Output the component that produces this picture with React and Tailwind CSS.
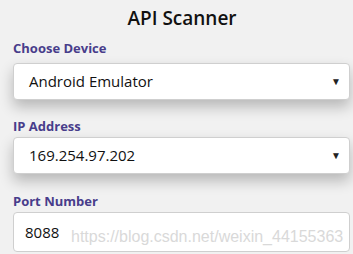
export default function App() {
  return (
    <div className="relative w-[353px] h-[254px] overflow-hidden bg-[#f1f1f1] font-['Open_Sans',sans-serif]">
      <div className="pl-[13px] pr-[3px] pt-[5px]">
        <h1 className="text-center text-[19px] font-semibold leading-[26px] text-[#111] pl-[1px]">API Scanner</h1>
        <div className="mt-[8px] text-[13px] font-bold leading-[18px] text-[#483d8b]">Choose Device</div>
        <div className="mt-[6px] flex h-[37px] items-center justify-between rounded-[4px] border border-[#cfcfcf] bg-white pl-[15px] pr-[8px] shadow-[0_7px_14px_rgba(0,0,0,0.24)]">
          <span className="text-[15px] text-[#111]">Android Emulator</span>
          <span className="text-[10px] text-[#222]">▼</span>
        </div>
        <div className="mt-[17px] text-[13px] font-bold leading-[18px] text-[#483d8b]">IP Address</div>
        <div className="mt-[2px] flex h-[37px] items-center justify-between rounded-[4px] border border-[#cfcfcf] bg-white pl-[15px] pr-[8px] shadow-[0_7px_14px_rgba(0,0,0,0.24)]">
          <span className="text-[15px] text-[#111]">169.254.97.202</span>
          <span className="text-[10px] text-[#222]">▼</span>
        </div>
        <div className="mt-[18px] text-[13px] font-bold leading-[18px] text-[#483d8b]">Port Number</div>
        <div className="mt-[2px] flex h-[40px] items-center rounded-[4px] border border-[#cfcfcf] bg-white pl-[11px]">
          <span className="text-[15px] text-[#111]">8088</span>
        </div>
      </div>
      <div className="absolute left-[71px] top-[228px] font-['Liberation_Sans',sans-serif] text-[16px] leading-[18px] text-[#d9d9d9]">https://blog.csdn.net/weixin_44155363</div>
    </div>
  );
}
